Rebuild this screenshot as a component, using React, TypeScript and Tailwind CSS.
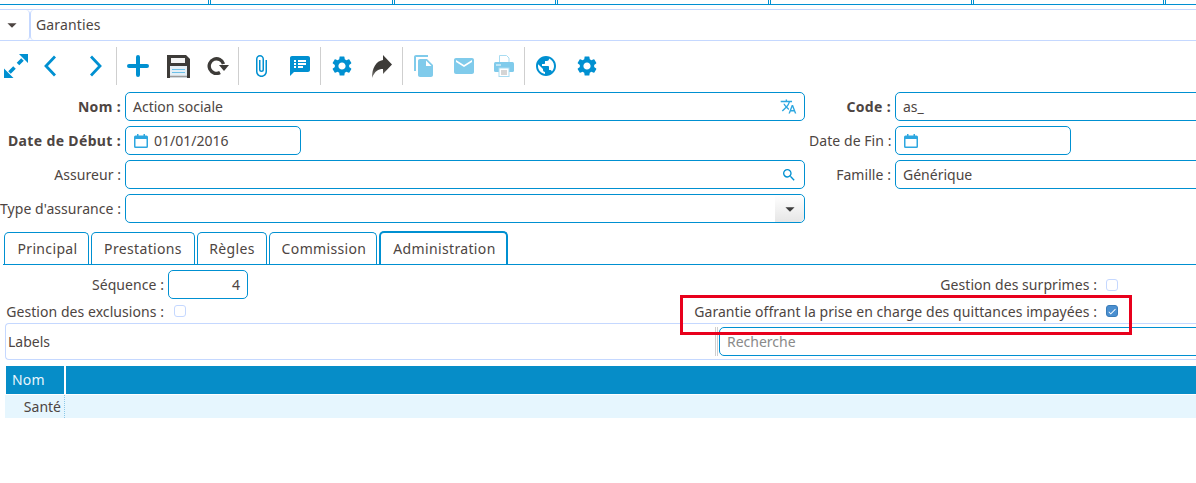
import { MdAttachFile, MdSpeakerNotes, MdSettings, MdFileCopy, MdEmail, MdPublic, MdTranslate, MdSearch, MdArrowDropDown, MdCheck } from "react-icons/md";
import type { ReactNode } from "react";

const font = "font-['Noto_Sans','Open_Sans',sans-serif]";

function Sep({ className = "" }: { className?: string }) {
  return <div className={`w-px h-[38px] bg-[#cfcfcf] shrink-0 ${className}`} />;
}

function Field({ children, className = "" }: { children?: ReactNode; className?: string }) {
  return (
    <div className={`h-[29px] border border-[#0090d1] rounded-[5px] bg-white flex items-center text-[14px] text-[#4d4542] ${className}`}>
      {children}
    </div>
  );
}

function Label({ children, bold }: { children: ReactNode; bold?: boolean }) {
  return (
    <div className={`text-right text-[14px] whitespace-nowrap text-[#4d4542] ${bold ? "font-bold tracking-[0.35px]" : "tracking-[0.06px]"}`}>
      {children}
    </div>
  );
}

function Tab({ children, w, active }: { children: ReactNode; w: string; active?: boolean }) {
  return (
    <div className={`${w} shrink-0 flex items-center justify-center rounded-t-[5px] border-[#0090d1] text-[14px] tracking-[0.35px] text-[#4d4542] pb-[1px] ${active ? "h-[33px] border-x-2 border-t-2" : "h-[32px] border-x border-t"}`}>
      {children}
    </div>
  );
}

function Check({ checked }: { checked?: boolean }) {
  return checked ? (
    <div className="w-[12px] h-[12px] shrink-0 rounded-[3px] bg-[#4a8fd0] border border-[#3a7cb8] flex items-center justify-center text-white">
      <MdCheck size={11} />
    </div>
  ) : (
    <div className="w-[12px] h-[12px] shrink-0 rounded-[3px] bg-white border border-[#c5d8ff]" />
  );
}

function CalendarIcon({ className = "" }: { className?: string }) {
  return (
    <svg className={`shrink-0 ${className}`} width="14" height="14" viewBox="0 0 14 14" fill="none">
      <path d="M3 0h1.500v1.500h5V0H11v1.500h1.500a1.500 1.500 0 0 1 1.500 1.500v9.500a1.500 1.500 0 0 1-1.500 1.500h-11A1.500 1.500 0 0 1 0 12.500V3a1.500 1.500 0 0 1 1.500-1.500H3z" fill="#2da7e0" />
      <rect x="1.500" y="5" width="11" height="7.500" fill="#fff" />
    </svg>
  );
}

export default function App() {
  const stops = ["w-[209px]", "w-[183px]", "w-[162px]", "w-[212px]", "w-[202px]", "w-[191px]"];
  return (
    <div className={`relative w-[1196px] h-[483px] overflow-hidden bg-white ${font}`}>
      <div className="flex gap-[1px] h-[5px] border-b border-[#0090d1]">
        {stops.map((s, i) => (
          <div key={i} className={`${s} shrink-0 border-r border-[#0090d1] ${i > 0 ? "border-l" : ""}`} />
        ))}
        <div className="flex-1 border-l border-[#0090d1]" />
      </div>

      <div className="mt-[4px] h-[32px] flex border-y border-[#c5d8ff]">
        <div className="w-[30px] shrink-0 flex items-center justify-center pr-[5px] border-r border-[#c5d8ff] rounded-r-[4px] text-[#4d4542]">
          <MdArrowDropDown size={22} />
        </div>
        <div className="flex-1 border-l border-[#c5d8ff] rounded-l-[4px] pl-[5px] pb-[2px] flex items-center text-[14px] tracking-[0.15px] text-[#4d4542]">Garanties</div>
      </div>

      <div className="h-[50px] mb-[1px] flex items-center text-[#0090d1]">
        <svg className="ml-[4px] shrink-0" width="24" height="24" viewBox="0 0 24 24" fill="currentColor">
          <path d="M15 0h9v9z M0 24v-9.500L9.500 24z" />
          <path d="M18.500 5.500L14 10 M5.500 18.500L10.500 13.500" stroke="currentColor" strokeWidth="3.600" fill="none" />
        </svg>
        <svg className="ml-[16px] shrink-0" width="12" height="22" viewBox="0 0 12 22" fill="none" stroke="currentColor" strokeWidth="2.800"><path d="M11 1.500L2 11l9 9.500" /></svg>
        <svg className="ml-[34px] shrink-0" width="12" height="22" viewBox="0 0 12 22" fill="none" stroke="currentColor" strokeWidth="2.800"><path d="M1 1.500L10 11l-9 9.500" /></svg>
        <Sep className="ml-[14px]" />

        <svg className="ml-[10px] shrink-0" width="22" height="22" viewBox="0 0 22 22" fill="none" stroke="currentColor" strokeWidth="4" strokeLinecap="round"><path d="M11 2v18M2 11h18" /></svg>
        <svg className="ml-[18px] shrink-0" width="23" height="23" viewBox="0 0 23 23">
          <path d="M0 0H19L23 4V23H0Z" fill="#3d3b38" />
          <rect x="4" y="3" width="14" height="5" fill="#f4f4f4" />
          <rect x="3" y="11" width="17" height="12" fill="#e4eef5" />
          <path d="M5 14.500H18 M5 17.500H18" stroke="#6cc0e8" strokeWidth="1" />
          <path d="M3 21.500H20" stroke="#9a9a9a" strokeWidth="1.500" />
        </svg>
        <svg className="ml-[17px] shrink-0" width="22" height="18" viewBox="0 0 22 18" fill="none">
          <path d="M16.500 7A7.300 7.300 0 1 0 13 15.500" stroke="#3d3b38" strokeWidth="3.400" />
          <path d="M12 8H22L17 14Z" fill="#3d3b38" />
        </svg>
        <Sep className="ml-[9px]" />

        <MdAttachFile className="ml-[10px] shrink-0" size={24} />
        <MdSpeakerNotes className="ml-[15px] shrink-0" size={24} />
        <Sep className="ml-[8px]" />

        <MdSettings className="ml-[9px] shrink-0" size={24} />
        <svg className="ml-[18px] shrink-0" width="20" height="23" viewBox="0 0 20 23">
          <defs>
            <linearGradient id="shareFade" x1="0" y1="0" x2="0" y2="1">
              <stop offset="0.600" stopColor="#3d3b38" />
              <stop offset="1" stopColor="#8a8884" />
            </linearGradient>
          </defs>
          <path d="M11 0L20 9.500L11 19V14C6 14 3 16 0 23C0 13 4 6 11 5Z" fill="url(#shareFade)" />
        </svg>
        <Sep className="ml-[10px]" />

        <MdFileCopy className="ml-[9px] shrink-0 text-[#80cbeb]" size={24} />
        <MdEmail className="ml-[16px] shrink-0 text-[#80cbeb]" size={24} />
        <svg className="ml-[18px] shrink-0" width="20" height="22" viewBox="0 0 20 22">
          <path d="M5.500 7V.5H12.500L15 3V7" fill="#fff" stroke="#a8dcf2" />
          <rect x="0" y="7" width="20" height="10" rx="1.500" fill="#80cbeb" />
          <path d="M2 10H7" stroke="#fff" />
          <rect x="5" y="13" width="10" height="8.500" fill="#fff" stroke="#a8dcf2" />
          <rect x="7" y="15" width="6" height="5" fill="#d5d5d5" />
        </svg>
        <Sep className="ml-[10px]" />

        <MdPublic className="ml-[9px] shrink-0" size={24} />
        <MdSettings className="ml-[17px] shrink-0" size={24} />
      </div>

      <div className="grid grid-cols-[121px_680px_82px_1fr] gap-x-[4px] gap-y-[5px] items-center">
        <Label bold>Nom :</Label>
        <Field className="pl-[7px] pr-[7px] justify-between"><span>Action sociale</span><MdTranslate className="text-[#2da7e0]" size={17} /></Field>
        <Label bold>Code :</Label>
        <Field className="pl-[7px] w-[320px]">as_</Field>

        <Label bold>Date de Début :</Label>
        <Field className="w-[176px] pl-[8px] gap-[6px]"><CalendarIcon />01/01/2016</Field>
        <Label>Date de Fin :</Label>
        <Field className="w-[176px] pl-[8px]"><CalendarIcon /></Field>

        <Label>Assureur :</Label>
        <Field className="justify-end pr-[7px]"><MdSearch className="text-[#0090d1]" size={16} /></Field>
        <Label>Famille :</Label>
        <Field className="pl-[7px] w-[320px]">Générique</Field>

        <Label>Type d'assurance :</Label>
        <Field className="justify-end">
          <div className="w-[29px] h-full rounded-r-[5px] bg-gradient-to-b from-white to-[#e6e6e6] flex items-center justify-center text-[#3d3d3d]">
            <MdArrowDropDown size={22} />
          </div>
        </Field>
      </div>

      <div className="mt-[8px] ml-[4px] h-[33px] flex items-end gap-[2px]">
        <Tab w="w-[85px] pl-[2px]">Principal</Tab>
        <Tab w="w-[104px]">Prestations</Tab>
        <Tab w="w-[70px]">Règles</Tab>
        <Tab w="w-[108px] pl-[2px]">Commission</Tab>
        <Tab w="w-[129px] pl-[2px]" active>Administration</Tab>
      </div>
      <div className="ml-[3px] h-px bg-[#0090d1]" />

      <div className="mt-[5px] flex items-center h-[29px]">
        <div className="w-[164px]"><Label>Séquence :</Label></div>
        <Field className="ml-[4px] w-[80px] justify-end pr-[7px]">4</Field>
        <div className="w-[849px]"><Label>Gestion des surprimes :</Label></div>
        <div className="ml-[9px]"><Check /></div>
      </div>
      <div className="flex items-center h-[24px]">
        <div className="w-[164px]"><Label>Gestion des exclusions :</Label></div>
        <div className="ml-[10px]"><Check /></div>
        <div className="w-[911px]"><Label>Garantie offrant la prise en charge des quittances impayées :</Label></div>
        <div className="ml-[9px]"><Check checked /></div>
      </div>

      <div className="ml-[5px] h-[37px] flex items-center border border-r-0 border-[#c5d8ff] rounded-l-[4px] text-[14px] text-[#4d4542]">
        <div className="w-[709px] pl-[2px]">Labels</div>
        <div className="w-[3px] h-[29px] border-x border-[#cfcfcf]" />
        <Field className="ml-[1px] flex-1 -mr-[10px] pl-[7px] !text-[#8a8a8a]">Recherche</Field>
      </div>

      <div className="ml-[6px] mt-[6px] h-[28px] flex bg-[#068dc8] text-[14px] tracking-[0.2px] text-[#e8f6fd]">
        <div className="w-[60px] pl-[6px] pb-[1px] flex items-center border-r-2 border-white">Nom</div>
      </div>
      <div className="ml-[5px] h-[24px] flex bg-[#e6f6fe] text-[14px] text-[#4d4542] border-t border-white">
        <div className="w-[60px] pr-[3px] flex items-center justify-end border-r border-dotted border-[#8cc8e8]">Santé</div>
      </div>

      <div className="absolute left-[680px] top-[295px] w-[452px] h-[40px] border-[3px] border-[#e8001c]" />
    </div>
  );
}
